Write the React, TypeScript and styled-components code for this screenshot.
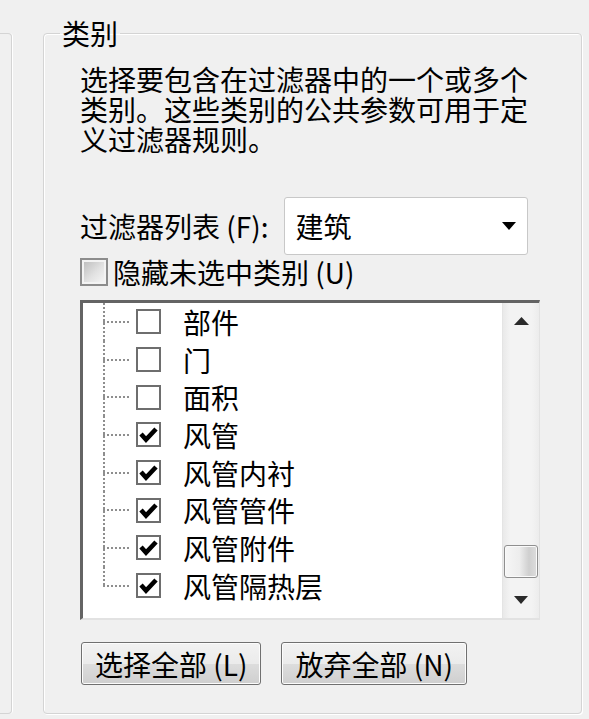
import styled, { createGlobalStyle } from 'styled-components';

const GlobalStyle = createGlobalStyle`
  html, body {
    margin: 0;
    padding: 0;
  }
  body {
    background: #f0f0f0;
    font-family: "Noto Sans CJK SC", "Noto Sans", sans-serif;
    color: #000;
  }
`;

const Page = styled.div`
  display: flex;
  align-items: stretch;
  width: 589px;
  height: 719px;
  box-sizing: border-box;
  padding: 18px 0 5px 0;
  overflow: hidden;
`;

// right edge of the neighbouring group box, cut off by the screenshot
const NeighbourBox = styled.div`
  width: 12px;
  margin-top: 15px;
  box-sizing: border-box;
  border: 1px solid #d4d4d4;
  border-left: none;
  border-radius: 0 4px 4px 0;
  box-shadow: 1px 0 0 #fff;
`;

const Group = styled.fieldset`
  width: 539px;
  margin: 0 0 0 31px;
  box-sizing: border-box;
  padding: 16px 41px 28px 36px;
  border: 1px solid #d4d4d4;
  border-radius: 4px;
  box-shadow: inset 1px 1px 0 #fff, 1px 1px 0 #fff;
  min-width: 0;
`;

const GroupTitle = styled.legend`
  margin-left: -20px;
  padding: 0 2px;
  font-size: 28px;
  line-height: 30px;
`;

const Hint = styled.div`
  display: flex;
  flex-direction: column;
`;

const HintLine = styled.span`
  height: 30px;
  font-size: 28px;
  line-height: 30px;
  white-space: nowrap;
`;

const FilterRow = styled.div`
  display: flex;
  align-items: center;
  gap: 16px;
  margin-top: 43px;
`;

const Label = styled.span`
  font-size: 28px;
  line-height: 30px;
  white-space: nowrap;
`;

const Combo = styled.div`
  width: 244px;
  height: 58px;
  box-sizing: border-box;
  display: flex;
  align-items: center;
  justify-content: space-between;
  padding: 0 11px 0 10px;
  background: #fff;
  border: 1px solid #c8c8c8;
  border-radius: 3px;
  font-size: 28px;
`;

const CheckRow = styled.label`
  display: flex;
  align-items: center;
  gap: 5px;
  height: 30px;
  margin-top: 2px;
`;

const BigCheck = styled.span`
  width: 28px;
  height: 28px;
  box-sizing: border-box;
  border: 2px solid #8c8c8c;
  background: linear-gradient(135deg, #b9b9b9 0%, #e2e2e2 55%, #f8f8f8 100%);
  box-shadow: inset 0 0 0 2px #f3f3f3;
`;

const ListBox = styled.div`
  display: flex;
  height: 320px;
  margin-top: 13px;
  box-sizing: border-box;
  background: #fff;
  border-top: 3px solid #646464;
  border-left: 3px solid #646464;
  border-right: 1px solid #e2e2e2;
  border-bottom: 2px solid #e2e2e2;
`;

const Tree = styled.div`
  flex: 1;
  display: flex;
  flex-direction: column;
`;

const TreeRow = styled.div`
  display: flex;
  align-items: center;
  height: 37.7px;
`;

const Connector = styled.span<{ $last?: boolean }>`
  align-self: stretch;
  width: 26px;
  margin-left: 20px;
  background-image: repeating-linear-gradient(to bottom, #8e8e8e 0 2px, transparent 2px 4px),
    repeating-linear-gradient(to right, #8e8e8e 0 2px, transparent 2px 4px);
  background-size: 2px ${(p) => (p.$last ? '50%' : '100%')}, 100% 2px;
  background-position: 0 0, 0 50%;
  background-repeat: no-repeat;
`;

const TreeCheck = styled.span`
  width: 25px;
  height: 25px;
  margin-left: 7px;
  box-sizing: border-box;
  display: grid;
  place-items: center;
  border: 2px solid #6e6e6e;
  background: #fff;
`;

const ItemText = styled.span`
  margin-left: 22px;
  font-size: 28px;
  line-height: 30px;
  white-space: nowrap;
`;

const ScrollBar = styled.div`
  width: 36px;
  display: flex;
  flex-direction: column;
  border-left: 1px solid #e4e4e4;
  background: linear-gradient(to right, #e9e9e9 0%, #f3f3f3 20%, #f3f3f3 80%, #ececec 100%);
`;

const ScrollButton = styled.div`
  height: 36px;
  display: grid;
  place-items: center;
`;

const Track = styled.div`
  flex: 1;
  display: flex;
  flex-direction: column;
  justify-content: flex-end;
  padding: 0 1px 4px 1px;
`;

const Thumb = styled.div`
  height: 33px;
  box-sizing: border-box;
  border: 1px solid #8f8f8f;
  border-radius: 3px;
  background: linear-gradient(to right, #f6f6f6 0%, #ededed 45%, #cfcfcf 75%, #dddddd 100%);
  box-shadow: inset 0 0 0 1px #fafafa;
`;

const ButtonRow = styled.div`
  display: flex;
  gap: 20px;
  margin-top: 22px;
  padding-left: 1px;
`;

const Button = styled.button`
  height: 43px;
  padding: 0 13px;
  font-family: inherit;
  font-size: 28px;
  line-height: 1;
  color: #000;
  border: 1px solid #707070;
  border-radius: 3px;
  background: linear-gradient(#f2f2f2 0%, #ebebeb 50%, #dddddd 50%, #cfcfcf 100%);
  box-shadow: inset 0 0 0 1px #fcfcfc;
`;

const Tick = () => (
  <svg width="19" height="17" viewBox="0 0 19 17">
    <path d="M2 8 L7 13.5 L17 3" fill="none" stroke="#000" strokeWidth="4.6" />
  </svg>
);

const ArrowUp = () => (
  <svg width="15" height="8" viewBox="0 0 15 8">
    <polygon points="7.5,0 15,8 0,8" fill="#2a2a2a" />
  </svg>
);

const ArrowDown = ({ color = '#2a2a2a' }: { color?: string }) => (
  <svg width="14" height="8" viewBox="0 0 14 8">
    <polygon points="0,0 14,0 7,8" fill={color} />
  </svg>
);

const hintLines = ['选择要包含在过滤器中的一个或多个', '类别。这些类别的公共参数可用于定', '义过滤器规则。'];

const categories = [
  { name: '部件', checked: false },
  { name: '门', checked: false },
  { name: '面积', checked: false },
  { name: '风管', checked: true },
  { name: '风管内衬', checked: true },
  { name: '风管管件', checked: true },
  { name: '风管附件', checked: true },
  { name: '风管隔热层', checked: true },
];

export default function App() {
  return (
    <>
      <GlobalStyle />
      <Page>
        <NeighbourBox />
        <Group>
          <GroupTitle>类别</GroupTitle>
          <Hint>
            {hintLines.map((line) => (
              <HintLine key={line}>{line}</HintLine>
            ))}
          </Hint>
          <FilterRow>
            <Label>过滤器列表 (F):</Label>
            <Combo>
              <span>建筑</span>
              <ArrowDown color="#000" />
            </Combo>
          </FilterRow>
          <CheckRow>
            <BigCheck />
            <Label>隐藏未选中类别 (U)</Label>
          </CheckRow>
          <ListBox>
            <Tree>
              {categories.map((c, i) => (
                <TreeRow key={c.name}>
                  <Connector $last={i === categories.length - 1} />
                  <TreeCheck>{c.checked && <Tick />}</TreeCheck>
                  <ItemText>{c.name}</ItemText>
                </TreeRow>
              ))}
            </Tree>
            <ScrollBar>
              <ScrollButton>
                <ArrowUp />
              </ScrollButton>
              <Track>
                <Thumb />
              </Track>
              <ScrollButton>
                <ArrowDown />
              </ScrollButton>
            </ScrollBar>
          </ListBox>
          <ButtonRow>
            <Button>选择全部 (L)</Button>
            <Button>放弃全部 (N)</Button>
          </ButtonRow>
        </Group>
      </Page>
    </>
  );
}
